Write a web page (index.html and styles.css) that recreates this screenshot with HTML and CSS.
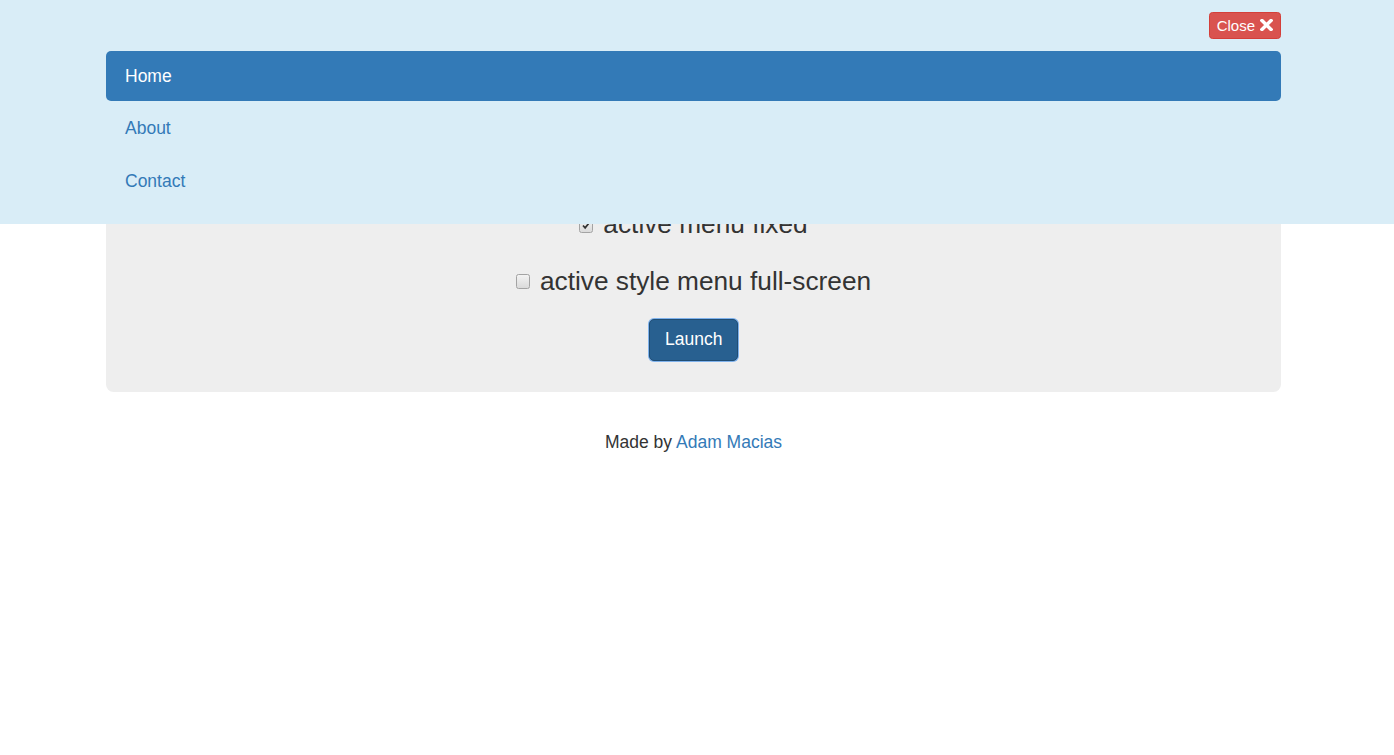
FILE: index.html
```html
<!DOCTYPE html>
<html lang="en">
<head>
<meta charset="utf-8">
<title>Menu demo</title>
<link rel="stylesheet" href="styles.css">
</head>
<body>
<div class="overlay">
  <div class="container">
    <div class="close-row">
      <button class="btn-close" type="button">Close <svg class="x-icon" viewBox="0 0 12 12" width="13" height="12"><path d="M1.5 1.5 L10.5 10.5 M10.5 1.5 L1.5 10.5" stroke="#fff" stroke-width="3.4" stroke-linecap="square" fill="none"/></svg></button>
    </div>
    <ul class="nav">
      <li class="active"><a href="#">Home</a></li>
      <li><a href="#">About</a></li>
      <li><a href="#">Contact</a></li>
    </ul>
  </div>
</div>

<div class="page">
  <div class="container">
    <div class="jumbotron">
      <p class="opt"><span class="cb checked"><svg viewBox="0 0 14 14" width="14" height="14"><path d="M3.5 7 L6 9.8 L10.5 4" stroke="#333" stroke-width="2" fill="none"/></svg></span>active menu fixed</p>
      <p class="opt"><span class="cb"></span>active style menu full-screen</p>
      <p class="launch-row"><button class="btn-launch" type="button">Launch</button></p>
    </div>
    <footer class="footer">Made by <a href="#">Adam Macias</a></footer>
  </div>
</div>
</body>
</html>
```

FILE: styles.css
```css
* { box-sizing: border-box; }
html, body { margin: 0; padding: 0; }
body {
  font-family: "Liberation Sans", Arial, Helvetica, sans-serif;
  font-size: 17.5px;
  line-height: 25px;
  color: #333;
  background: #fff;
  padding-right: 7px;
}
a { color: #337ab7; text-decoration: none; }
.container { width: 1175px; margin: 0 auto; }

.overlay {
  position: fixed;
  top: 0; left: 0; right: 0;
  height: 224px;
  background: #d9edf7;
  padding-right: 7px;
  z-index: 10;
}
.close-row {
  display: flex;
  justify-content: flex-end;
  padding-top: 12px;
  height: 51px;
}
.btn-close {
  display: flex;
  align-items: center;
  gap: 5px;
  height: 27px;
  padding: 0 7px 0 7px;
  background: #d9534f;
  border: 1px solid #d43f3a;
  border-radius: 3.5px;
  color: #fff;
  font-family: "Liberation Sans", Arial, sans-serif;
  font-size: 15px;
  line-height: 22px;
}
.x-icon { display: block; margin-top: -1px; }
.nav { list-style: none; margin: 0; padding: 0; }
.nav li + li { margin-top: 2.5px; }
.nav a {
  display: block;
  padding: 12.5px 19px;
  font-size: 17.5px;
  line-height: 25px;
  border-radius: 5px;
  color: #337ab7;
}
.nav li.active a { background: #337ab7; color: #fff; }

.page { padding-top: 150px; }
.jumbotron {
  background: #eee;
  border-radius: 7.5px;
  padding: 56.25px 20px 31.25px;
  text-align: center;
}
.opt {
  margin: 0 0 18.75px;
  font-size: 26.25px;
  line-height: 37.5px;
  display: flex;
  justify-content: center;
  align-items: center;
}
.cb {
  display: inline-block;
  width: 14px;
  height: 15px;
  margin-right: 10px;
  border: 1px solid #a3a3a3;
  border-radius: 2.5px;
  background: linear-gradient(#f3f3f3, #dadada);
}
.cb svg { display: block; width: 12px; height: 13px; }
.launch-row { margin: 0; line-height: 0; }
.btn-launch {
  height: 42px;
  padding: 0 15px;
  width: 89px;
  background: #286090;
  border: 1px solid #204d74;
  border-radius: 5px;
  color: #fff;
  font-family: "Liberation Sans", Arial, sans-serif;
  font-size: 17.5px;
  line-height: 25px;
  box-shadow: 0 0 0 1px #7fb2ec;
}
.footer {
  text-align: center;
  margin-top: 38px;
  font-size: 17.5px;
  line-height: 25px;
}
```
